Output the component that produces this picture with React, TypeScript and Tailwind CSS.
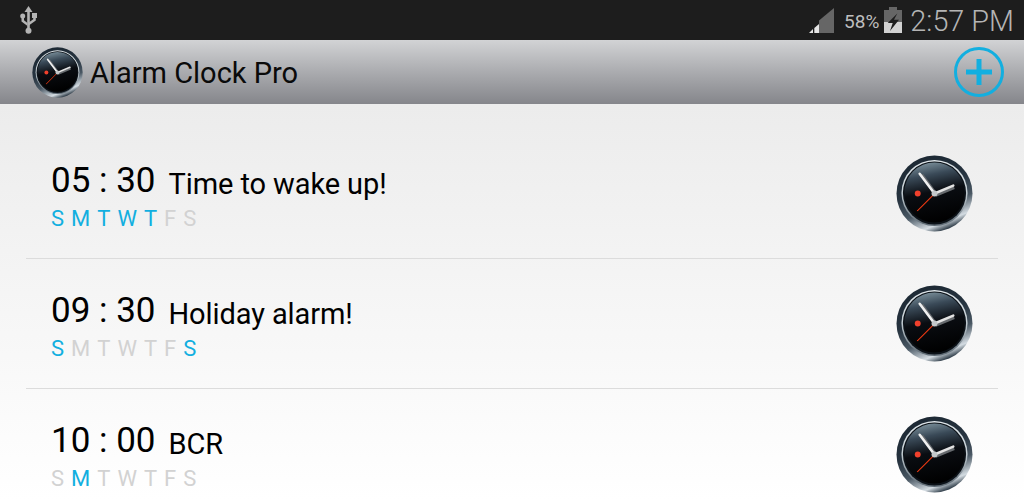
type Alarm = {
  time: string;
  label: string;
  days: boolean[];
};

const alarms: Alarm[] = [
  { time: "05 : 30", label: "Time to wake up!", days: [true, true, true, true, true, false, false] },
  { time: "09 : 30", label: "Holiday alarm!", days: [true, false, false, false, false, false, true] },
  { time: "10 : 00", label: "BCR", days: [false, true, false, false, false, false, false] },
];

const letters = ["S", "M", "T", "W", "T", "F", "S"];

const ClockIcon = ({ size }: { size: number }) => (
  <svg width={size} height={size} viewBox="0 0 78 78">
    <defs>
      <linearGradient id="rim" x1="0.2" y1="0" x2="0.6" y2="1">
        <stop offset="0" stopColor="#1b2732" />
        <stop offset="0.45" stopColor="#26333f" />
        <stop offset="0.7" stopColor="#4a5864" />
        <stop offset="0.9" stopColor="#d4dce2" />
        <stop offset="1" stopColor="#22303c" />
      </linearGradient>
      <linearGradient id="ring" x1="0" y1="0" x2="0" y2="1">
        <stop offset="0" stopColor="#dfe6ea" />
        <stop offset="0.5" stopColor="#c4ced4" />
        <stop offset="1" stopColor="#5a6670" />
      </linearGradient>
      <linearGradient id="face" x1="0.3" y1="0" x2="0.5" y2="1">
        <stop offset="0" stopColor="#7d929d" />
        <stop offset="0.22" stopColor="#3a4a58" />
        <stop offset="0.5" stopColor="#0a0d12" />
        <stop offset="1" stopColor="#000000" />
      </linearGradient>
    </defs>
    <circle cx="39" cy="39" r="38.5" fill="url(#rim)" />
    <circle cx="39" cy="38.5" r="33.5" fill="url(#ring)" />
    <circle cx="39" cy="38.5" r="32" fill="#0c1218" />
    <circle cx="39" cy="38" r="30.5" fill="url(#face)" />
    <circle cx="22" cy="39" r="3" fill="#f0402c" />
    <path d="M39 38.500L21 56.500l1 .6L39.500 39.500z" fill="#f23a12" />
    <line x1="40.500" y1="40" x2="26" y2="20" stroke="#666a6e" strokeWidth="3.500" />
    <line x1="39" y1="39" x2="24" y2="19" stroke="#f0f0f0" strokeWidth="2.600" strokeLinecap="round" />
    <line x1="40" y1="41" x2="59" y2="33" stroke="#666a6e" strokeWidth="3" />
    <line x1="39" y1="39" x2="58" y2="31" stroke="#e4e4e4" strokeWidth="2.600" strokeLinecap="round" />
    <circle cx="39" cy="39" r="3" fill="#c4c8ca" />
  </svg>
);

const UsbIcon = () => (
  <svg width="18" height="28" viewBox="0 0 18 28" fill="#b4b4b4">
    <path d="M8.500 0l4 6h-8z" />
    <rect x="7.200" y="5" width="2.600" height="18" />
    <circle cx="8.500" cy="24.800" r="3" />
    <circle cx="2.700" cy="10" r="2.500" />
    <rect x="12" y="7" width="5" height="5" />
    <path d="M1.500 11v4.500l6 4.500v-3l-3.500-2.700V11z" />
    <path d="M15.800 11v3.500l-7 5v-3l4.400-3.200V11z" />
  </svg>
);

const SignalIcon = () => (
  <svg width="25" height="25" viewBox="0 0 25 25">
    <path d="M25 0v25H10V12.500z" fill="#666666" />
    <path d="M4 21v4H0z" fill="#e6e6e6" />
    <path d="M5.300 20l4.700-4v9H5.300z" fill="#e6e6e6" />
  </svg>
);

const BatteryIcon = () => (
  <svg width="18" height="26" viewBox="0 0 18 26">
    <path d="M5 0h8v3h5v23H0V3h5z" fill="#666666" />
    <path d="M0 15h18v11H0z" fill="#d2d2d2" />
    <path d="M13.300 6.500L3.700 16h5L6 24l9-11.300h-5l3.300-6.200z" fill="#1d1d1d" />
  </svg>
);

const PlusIcon = () => (
  <svg width="50" height="50" viewBox="0 0 50 50" fill="none" stroke="#12afe0">
    <circle cx="25" cy="25" r="23.500" strokeWidth="3" />
    <path d="M12 25h26M25 12v26" strokeWidth="5" />
  </svg>
);

const AlarmRow = ({ alarm, last }: { alarm: Alarm; last: boolean }) => (
  <div className={`h-[130px] shrink-0 flex items-center justify-between pl-[25px] pr-[25px] ${last ? "" : "border-b border-[#dcdcdc]"}`}>
    <div className="flex flex-col pt-1">
      <div className="flex items-start h-[41px]">
        <span className="text-[35px] leading-[41px] text-black">{alarm.time}</span>
        <span className="text-[29px] tracking-[-0.1px] leading-[41px] text-black ml-[13px] mt-1">{alarm.label}</span>
      </div>
      <div className="flex gap-[7px] h-[27px] mt-1 text-[22px] leading-[27px]">
        {alarm.days.map((on, i) => (
          <span key={i} className={on ? "text-[#12afe0]" : "text-[#d2d2d2]"}>
            {letters[i]}
          </span>
        ))}
      </div>
    </div>
    <ClockIcon size={77} />
  </div>
);

export default function App() {
  return (
    <div className="w-[1024px] h-[500px] overflow-hidden flex flex-col font-['Roboto',sans-serif]">
      <div className="h-10 shrink-0 bg-[#1d1d1d] flex items-center justify-between pl-5 pr-[10px]">
        <UsbIcon />
        <div className="flex items-center">
          <SignalIcon />
          <span className="ml-[10px] pt-1 text-[19px] text-[#bebebe]">58%</span>
          <div className="ml-[5px]">
            <BatteryIcon />
          </div>
          <span className="ml-[8px] pt-1 text-[28.8px] font-light text-[#b4b4b4]">2:57 PM</span>
        </div>
      </div>
      <div className="h-16 shrink-0 bg-gradient-to-b from-[#d2d3d5] to-[#85868b] flex items-center justify-between pl-8 pr-5">
        <div className="flex items-center">
          <ClockIcon size={51} />
          <span className="ml-[7px] pt-1 text-[29px] text-[#0a0a0a]">Alarm Clock Pro</span>
        </div>
        <PlusIcon />
      </div>
      <div className="flex-1 min-h-0 overflow-hidden bg-gradient-to-b from-[#ececec] to-white pt-[25px] px-[1px]">
        <div className="flex flex-col mx-[25px]">
          {alarms.map((alarm, i) => (
            <AlarmRow key={alarm.time} alarm={alarm} last={i === alarms.length - 1} />
          ))}
        </div>
      </div>
    </div>
  );
}
